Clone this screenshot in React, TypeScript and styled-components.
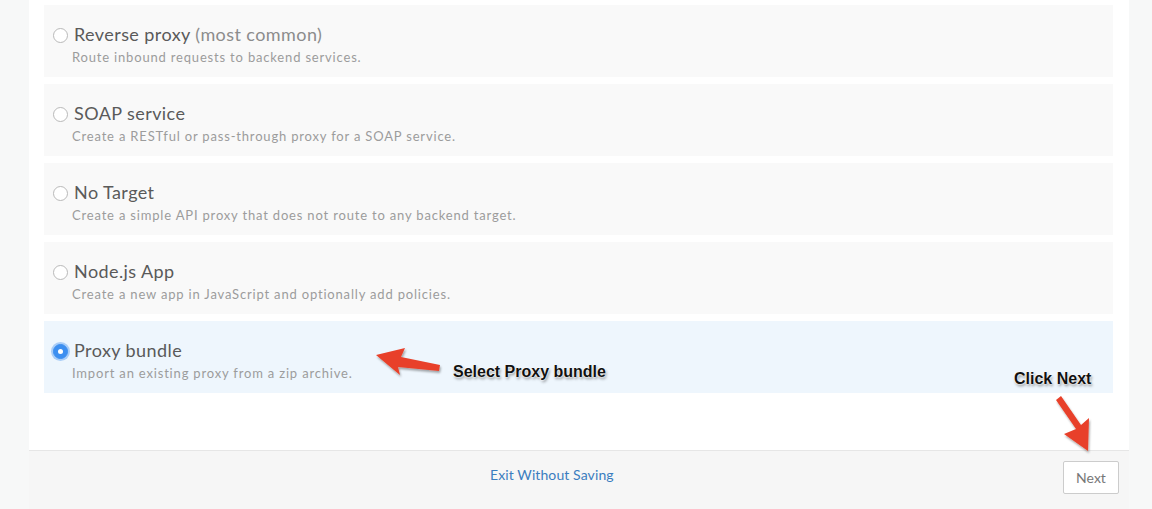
import React from "react";
import styled, { createGlobalStyle } from "styled-components";

const Global = createGlobalStyle`
  html, body { margin: 0; padding: 0; background: #f7f8f8; }
  body { font-family: Lato, "Open Sans", sans-serif; }
`;

const Page = styled.div`
  position: relative;
  width: 1152px;
  height: 509px;
  overflow: hidden;
  background: #f7f8f8;
  padding: 0 23px 0 29px;
  box-sizing: border-box;
`;

const Panel = styled.div`
  background: #ffffff;
  padding: 5px 16px 0 15px;
  height: 450px;
  box-sizing: border-box;
  display: flex;
  flex-direction: column;
  gap: 7px;
`;

const Card = styled.label<{ $selected?: boolean }>`
  display: block;
  height: 72px;
  box-sizing: border-box;
  padding: 18px 9px 0;
  background: ${(p) => (p.$selected ? "#eef6fd" : "#f9f9f9")};
  cursor: pointer;
`;

const TitleRow = styled.div`
  display: flex;
  align-items: center;
  gap: 6px;
  height: 22px;
`;

const Radio = styled.span<{ $checked?: boolean }>`
  width: 15px;
  height: 15px;
  border-radius: 50%;
  box-sizing: border-box;
  flex: none;
  position: relative;
  top: 1px;
  border: 1px solid ${(p) => (p.$checked ? "#3d8ff0" : "#b9b9b9")};
  background: ${(p) => (p.$checked ? "#3d8ff0" : "#ffffff")};
  box-shadow: ${(p) => (p.$checked ? "0 0 0 2px #a9cdf7" : "none")};
  &::after {
    content: "";
    display: ${(p) => (p.$checked ? "block" : "none")};
    position: absolute;
    width: 5px;
    height: 5px;
    border-radius: 50%;
    background: #fff;
    left: 4px;
    top: 4px;
  }
`;

const Title = styled.span`
  font-size: 18px;
  color: #5a5a5a;
  line-height: 22px;
  letter-spacing: 0.42px;
`;

const Muted = styled.span`
  color: #8c8c8c;
`;

const Desc = styled.div`
  font-size: 13px;
  line-height: 16px;
  color: #9c9c9c;
  margin: 4px 0 0 19px;
  letter-spacing: 0.82px;
`;

const Footer = styled.div`
  height: 59px;
  box-sizing: border-box;
  background: #f6f6f6;
  border-top: 1px solid #e6e6e6;
  display: flex;
  align-items: flex-start;
  padding: 10px 10px 0 461px;
`;

const ExitLink = styled.a`
  font-size: 14px;
  color: #3b7dbf;
  text-decoration: none;
  line-height: 16px;
  margin-top: 6px;
  letter-spacing: 0.1px;
`;

const NextButton = styled.button`
  margin-left: auto;
  width: 56px;
  height: 33px;
  background: #ffffff;
  border: 1px solid #cccccc;
  border-radius: 2px;
  font-family: Lato, sans-serif;
  font-size: 14px;
  color: #777777;
  padding: 0;
`;

const Note = styled.div<{ $x: number; $y: number }>`
  position: absolute;
  left: ${(p) => p.$x}px;
  top: ${(p) => p.$y}px;
  font-family: "Liberation Sans", Arial, sans-serif;
  font-weight: 700;
  font-size: 16px;
  line-height: 18px;
  color: #111;
  white-space: nowrap;
  text-shadow: 0 0 1px #fff, 0 0 2px #fff, 0 0 2px #fff, 1px 2px 3px rgba(0, 0, 0, 0.45);
`;

const Overlay = styled.svg`
  position: absolute;
  left: 0;
  top: 0;
  pointer-events: none;
`;

const options = [
  { title: "Reverse proxy", extra: "(most common)", desc: "Route inbound requests to backend services." },
  { title: "SOAP service", desc: "Create a RESTful or pass-through proxy for a SOAP service." },
  { title: "No Target", desc: "Create a simple API proxy that does not route to any backend target." },
  { title: "Node.js App", desc: "Create a new app in JavaScript and optionally add policies." },
  { title: "Proxy bundle", desc: "Import an existing proxy from a zip archive.", selected: true },
];

export default function App() {
  return (
    <Page>
      <Global />
      <Panel>
        {options.map((o) => (
          <Card key={o.title} $selected={o.selected}>
            <TitleRow>
              <Radio $checked={o.selected} />
              <Title>
                {o.title}
                {o.extra && <Muted> {o.extra}</Muted>}
              </Title>
            </TitleRow>
            <Desc>{o.desc}</Desc>
          </Card>
        ))}
      </Panel>
      <Footer>
        <ExitLink href="#">Exit Without Saving</ExitLink>
        <NextButton>Next</NextButton>
      </Footer>

      <Overlay width="1152" height="509" viewBox="0 0 1152 509">
        <defs>
          <filter id="sh" x="-20%" y="-20%" width="140%" height="140%">
            <feDropShadow dx="1" dy="2" stdDeviation="1.2" floodColor="#000" floodOpacity="0.35" />
          </filter>
        </defs>
        <polygon
          filter="url(#sh)"
          fill="#e8412a"
          points="376,355 405,348 401,357 440,365 439,371 398,367 400,375"
        />
        <polygon
          filter="url(#sh)"
          fill="#e8412a"
          points="1056,400 1061,396 1081,425 1089,418 1088,451 1064,434 1076,429"
        />
      </Overlay>
      <Note $x={453} $y={363}>Select Proxy bundle</Note>
      <Note $x={1014} $y={370}>Click Next</Note>
    </Page>
  );
}
